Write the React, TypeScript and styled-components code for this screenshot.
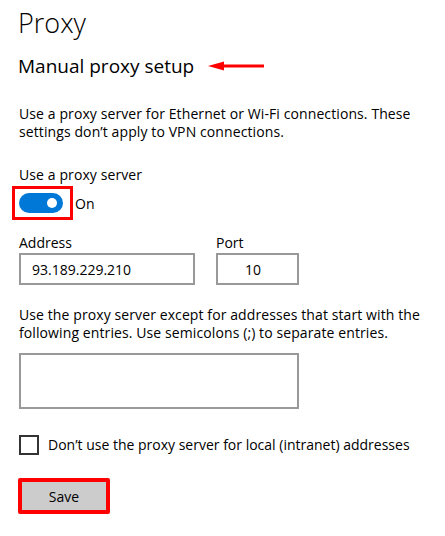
import React from "react";
import styled, { createGlobalStyle } from "styled-components";

const Global = createGlobalStyle`
  html, body { margin: 0; padding: 0; background: #fff; }
  body { font-family: "Open Sans", "Noto Sans", sans-serif; color: #000; }
`;

const Page = styled.div`
  width: 445px;
  height: 536px;
  box-sizing: border-box;
  padding: 5px 0 0 18px;
  display: flex;
  flex-direction: column;
  align-items: flex-start;
`;

const Title = styled.h1`
  margin: 0;
  font-size: 27px;
  font-weight: 300;
  line-height: 36px;
`;

const SubRow = styled.div`
  display: flex;
  align-items: center;
  margin-top: 12px;
  gap: 14px;
`;

const Subtitle = styled.h2`
  margin: 0;
  font-size: 19px;
  font-weight: 400;
  line-height: 26px;
`;

const Text = styled.p<{ $mt: number }>`
  margin: ${(p) => p.$mt}px 0 0 1px;
  font-size: 14px;
  line-height: 18px;
  letter-spacing: 0.1px;
`;

const ToggleRow = styled.div`
  display: flex;
  align-items: center;
  gap: 2px;
  margin-top: 2px;
`;

const Highlight = styled.div`
  border: 3px solid #f00;
  padding: 4px 7px 4px 4px;
  margin-left: -6px;
  display: flex;
`;

const Toggle = styled.div`
  width: 44px;
  height: 20px;
  border-radius: 10px;
  background: #0078d7;
  display: flex;
  align-items: center;
  justify-content: flex-end;
  padding-right: 6px;
  box-sizing: border-box;
`;

const Knob = styled.span`
  width: 10px;
  height: 10px;
  border-radius: 50%;
  background: #fff;
`;

const OnLabel = styled.span`
  font-size: 14px;
`;

const FieldRow = styled.div`
  display: flex;
  gap: 21px;
  margin-top: 14px;
  margin-left: 1px;
`;

const Field = styled.div`
  display: flex;
  flex-direction: column;
`;

const Label = styled.span`
  font-size: 14px;
  line-height: 18px;
`;

const Input = styled.div<{ $w: number; $pl: number }>`
  width: ${(p) => p.$w}px;
  height: 32px;
  box-sizing: border-box;
  border: 2px solid #999;
  margin-top: 1px;
  padding-left: ${(p) => p.$pl}px;
  font-size: 14px;
  display: flex;
  align-items: center;
`;

const TextArea = styled.div`
  width: 280px;
  height: 56px;
  box-sizing: border-box;
  border: 2px solid #999;
  margin-top: 11px;
  margin-left: 1px;
`;

const CheckRow = styled.div`
  display: flex;
  align-items: center;
  gap: 9px;
  margin-top: 26px;
  margin-left: 1px;
`;

const Check = styled.span`
  width: 20px;
  height: 20px;
  box-sizing: border-box;
  border: 2px solid #333;
`;

const SaveButton = styled.button`
  margin-top: 23px;
  width: 92px;
  height: 36px;
  box-sizing: border-box;
  border: 4px solid #f00;
  border-radius: 2px;
  background: #ccc;
  font-family: inherit;
  font-size: 14px;
  color: #000;
  padding: 0;
`;

const Arrow = () => (
  <svg width="58" height="10" viewBox="0 0 58 10">
    <line x1="14" y1="5" x2="56" y2="5" stroke="#f00" strokeWidth="3" />
    <polygon points="0,5 16,0.5 16,9.5" fill="#f00" />
  </svg>
);

export default function App() {
  return (
    <>
      <Global />
      <Page>
        <Title>Proxy</Title>
        <SubRow>
          <Subtitle>Manual proxy setup</Subtitle>
          <Arrow />
        </SubRow>
        <Text $mt={26}>
          Use a proxy server for Ethernet or Wi-Fi connections. These
          <br />
          settings don’t apply to VPN connections.
        </Text>
        <Text $mt={25}>Use a proxy server</Text>
        <ToggleRow>
          <Highlight>
            <Toggle>
              <Knob />
            </Toggle>
          </Highlight>
          <OnLabel>On</OnLabel>
        </ToggleRow>
        <FieldRow>
          <Field>
            <Label>Address</Label>
            <Input $w={176} $pl={11}>93.189.229.210</Input>
          </Field>
          <Field>
            <Label>Port</Label>
            <Input $w={83} $pl={27}>10</Input>
          </Field>
        </FieldRow>
        <Text $mt={21}>
          Use the proxy server except for addresses that start with the
          <br />
          following entries. Use semicolons (;) to separate entries.
        </Text>
        <TextArea />
        <CheckRow>
          <Check />
          <Label>Don’t use the proxy server for local (intranet) addresses</Label>
        </CheckRow>
        <SaveButton>Save</SaveButton>
      </Page>
    </>
  );
}
